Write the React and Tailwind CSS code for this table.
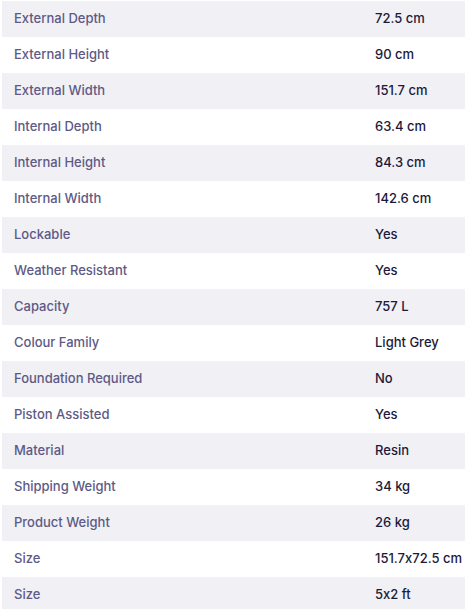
const specs = [
  ['External Depth', '72.5 cm'],
  ['External Height', '90 cm'],
  ['External Width', '151.7 cm'],
  ['Internal Depth', '63.4 cm'],
  ['Internal Height', '84.3 cm'],
  ['Internal Width', '142.6 cm'],
  ['Lockable', 'Yes'],
  ['Weather Resistant', 'Yes'],
  ['Capacity', '757 L'],
  ['Colour Family', 'Light Grey'],
  ['Foundation Required', 'No'],
  ['Piston Assisted', 'Yes'],
  ['Material', 'Resin'],
  ['Shipping Weight', '34 kg'],
  ['Product Weight', '26 kg'],
  ['Size', '151.7x72.5 cm'],
  ['Size', '5x2 ft'],
];

export default function App() {
  return (
    <div className="bg-white pt-px pl-[2px] pr-px font-['Inter',sans-serif] text-[13px] [font-feature-settings:'calt'_0]">
      {specs.map(([label, value], i) => (
        <div
          key={i}
          className={`grid h-9 grid-cols-[361px_1fr] items-center ${i % 2 === 0 ? 'bg-[#f1f0f5]' : 'bg-white'}`}
        >
          <div className="pl-3 font-medium text-[#5d5a85]">{label}</div>
          <div className="pl-3 font-medium text-[#1c1a3a]">{value}</div>
        </div>
      ))}
    </div>
  );
}
